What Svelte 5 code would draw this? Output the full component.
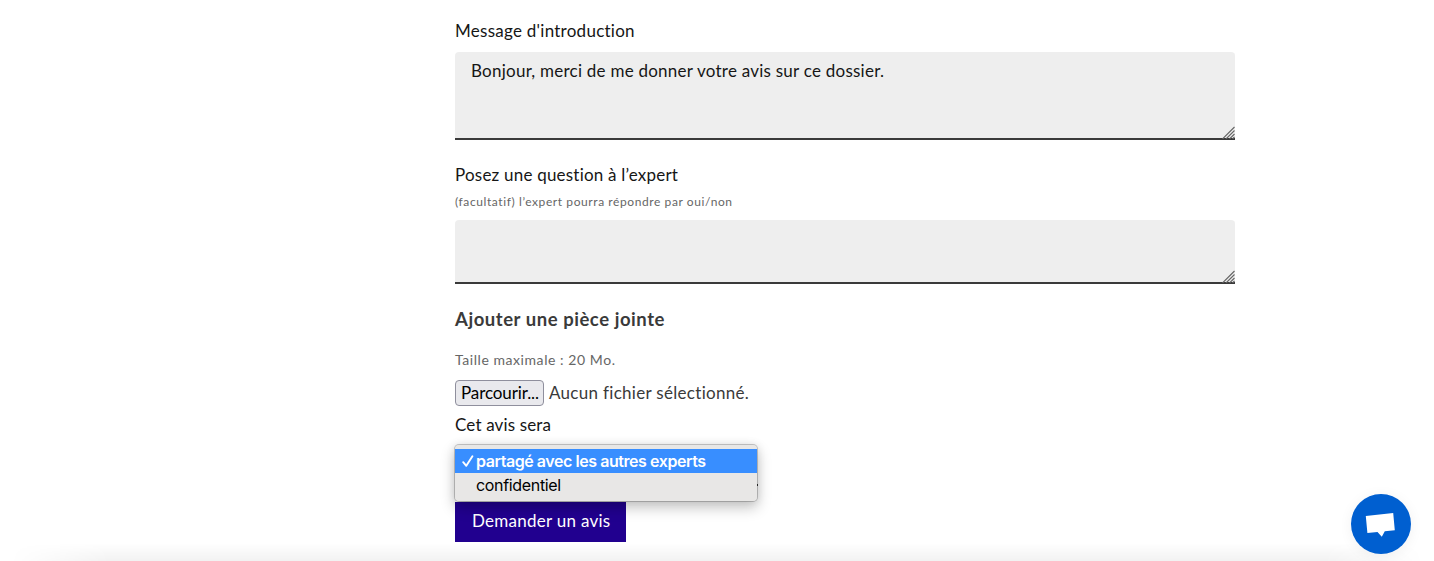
<script>
  const options = ['partagé avec les autres experts', 'confidentiel'];
  let selected = $state(0);
</script>

<main>
  <form onsubmit={(e) => e.preventDefault()}>
    <label class="label" for="intro"><span class="t-intro">Message d'introduction</span></label>
    <div class="area tall">
      <div id="intro" class="input" role="textbox" tabindex="-1"><span class="t-value">Bonjour, merci de me donner votre avis sur ce dossier.</span></div>
      <svg class="grip" viewBox="0 0 13 13"><path d="M0.5 13 12.5 1M4 13l8.5-8.5M7.5 13l5-5M10.5 13l2-2" /></svg>
    </div>

    <label class="label second" for="question"><span class="t-question">Posez une question à l’expert</span></label>
    <p class="hint"><span class="t-hint">(facultatif) l’expert pourra répondre par oui/non</span></p>
    <div class="area short">
      <div id="question" class="input" role="textbox" tabindex="-1"></div>
      <svg class="grip" viewBox="0 0 13 13"><path d="M0.5 13 12.5 1M4 13l8.5-8.5M7.5 13l5-5M10.5 13l2-2" /></svg>
    </div>

    <h2><span class="t-title">Ajouter une pièce jointe</span></h2>
    <p class="size"><span class="t-size">Taille maximale : 20 Mo.</span></p>
    <div class="file">
      <button type="button" class="browse"><span class="t-browse">Parcourir...</span></button>
      <span class="t-file">Aucun fichier sélectionné.</span>
    </div>

    <div class="label sera"><span class="t-sera">Cet avis sera</span></div>
    <div class="select">
      <div class="menu" role="listbox">
        {#each options as option, i}
          <div class="option" class:active={i === selected} role="option" aria-selected={i === selected} tabindex="-1">
            <span class="tick">
              {#if i === selected}
                <svg viewBox="0 0 12 12"><path d="M1.2 7.2 4.3 10.8 10.4 1.2" /></svg>
              {/if}
            </span>
            <span class="name">{option}</span>
          </div>
        {/each}
      </div>
    </div>
    <button class="submit"><span class="t-submit">Demander un avis</span></button>
  </form>
  <div class="fade"></div>
  <button class="chat" aria-label="Chat">
    <svg viewBox="0 0 60 60"><path d="M14.8 22 42.2 19 43.8 36.2 33.8 37.3 30.8 42.8 26.5 38.1 16.4 39Z" /></svg>
  </button>
</main>

<style>
  :global(body) {
    background: #fff;
    overflow: hidden;
  }
  main {
    position: relative;
    height: 561px;
    overflow: hidden;
    font: 17px/24px Lato, sans-serif;
    font-variant-ligatures: none;
    color: #161616;
  }
  form {
    width: 780px;
    margin-left: 455px;
    padding-top: 19px;
    display: flex;
    flex-direction: column;
    align-items: stretch;
  }
  button {
    border: 0;
    padding: 0;
    font: inherit;
  }
  p,
  h2 {
    margin: 0;
  }
  span {
    white-space: nowrap;
  }
  .t-intro {
    letter-spacing: 0.26px;
  }
  .t-value {
    letter-spacing: 0.24px;
  }
  .t-question {
    letter-spacing: 0.21px;
  }
  .t-hint {
    letter-spacing: 0.59px;
  }
  .t-title {
    letter-spacing: 0.55px;
  }
  .t-size {
    letter-spacing: 0.56px;
  }
  .t-browse {
    letter-spacing: -0.1px;
  }
  .t-file {
    letter-spacing: 0.3px;
  }
  .t-sera {
    letter-spacing: 0.15px;
  }
  .t-submit {
    letter-spacing: 0.27px;
  }
  .label {
    height: 24px;
    display: block;
  }
  .area {
    position: relative;
    box-sizing: border-box;
    background: #eee;
    border-radius: 4px 4px 0 0;
    box-shadow: inset 0 -2px #3a3a3a;
  }
  .tall {
    height: 88px;
    margin-top: 9px;
  }
  .short {
    height: 64px;
    margin-top: 8px;
  }
  .input {
    padding: 7px 16px;
  }
  .grip {
    position: absolute;
    right: 0;
    bottom: 1px;
    width: 13px;
    height: 13px;
    fill: none;
    stroke: #666;
    stroke-width: 1.1;
  }
  .second {
    margin-top: 23px;
  }
  .hint {
    height: 20px;
    margin-top: 5px;
    font-size: 12px;
    line-height: 20px;
    color: #666;
  }
  h2 {
    margin-top: 23px;
    font-size: 18.5px;
    line-height: 24px;
    color: #3a3a3a;
  }
  .size {
    margin-top: 17px;
    font-size: 14px;
    line-height: 24px;
    color: #666;
  }
  .file {
    display: flex;
    align-items: center;
    gap: 5px;
    height: 26px;
    margin-top: 8px;
    color: #3a3a3a;
  }
  .browse {
    box-sizing: border-box;
    width: 89px;
    height: 26px;
    border: 1px solid #8f8f9d;
    border-radius: 4px;
    background: #e9e9ed;
    color: #000;
    text-align: left;
    padding-left: 5px;
  }
  .sera {
    margin-top: 7px;
  }
  .select {
    box-sizing: border-box;
    position: relative;
    width: 303px;
    height: 42px;
    margin-top: 7px;
    margin-bottom: 16px;
    border-bottom: 2px solid #3a3a3a;
  }
  .menu {
    position: absolute;
    left: -1px;
    top: 0;
    width: 304px;
    height: 58px;
    box-sizing: border-box;
    border: 1px solid rgba(0, 0, 0, 0.2);
    background-clip: padding-box;
    border-radius: 5px;
    padding: 4px 0;
    background-color: #e8e7e6;
    box-shadow: 0 6px 14px rgba(0, 0, 0, 0.22), 0 0 8px rgba(0, 0, 0, 0.08);
    font: 16px/24px Inter, sans-serif;
    letter-spacing: -0.33px;
    color: #000;
    z-index: 2;
  }
  .option {
    display: flex;
    align-items: center;
    height: 24px;
    padding-left: 7px;
  }
  .active {
    background: #388eff;
    color: #fff;
    font-weight: 600;
    letter-spacing: -0.44px;
  }
  .tick {
    width: 14px;
    height: 14px;
    display: flex;
  }
  .tick svg {
    width: 12px;
    height: 14px;
    fill: none;
    stroke: #fff;
    stroke-width: 1.9;
    stroke-linecap: round;
    stroke-linejoin: round;
  }
  .submit {
    width: 171px;
    height: 40px;
    background: #21008f;
    color: #fff;
    text-align: left;
    padding: 0 0 2px 17px;
  }
  .fade {
    position: absolute;
    left: 0;
    right: 0;
    bottom: 0;
    height: 18px;
    background: linear-gradient(transparent, rgba(0, 0, 0, 0.05));
    mask-image: linear-gradient(90deg, transparent 10px, #000 110px, #000 1324px, transparent 1424px);
    pointer-events: none;
  }
  .chat {
    position: absolute;
    left: 1351px;
    top: 494px;
    width: 60px;
    height: 60px;
    border-radius: 50%;
    background: #005fd0;
    box-shadow: 0 2px 14px rgba(0, 0, 0, 0.06);
  }
  .chat svg {
    display: block;
    width: 60px;
    height: 60px;
    fill: #fff;
  }
</style>
